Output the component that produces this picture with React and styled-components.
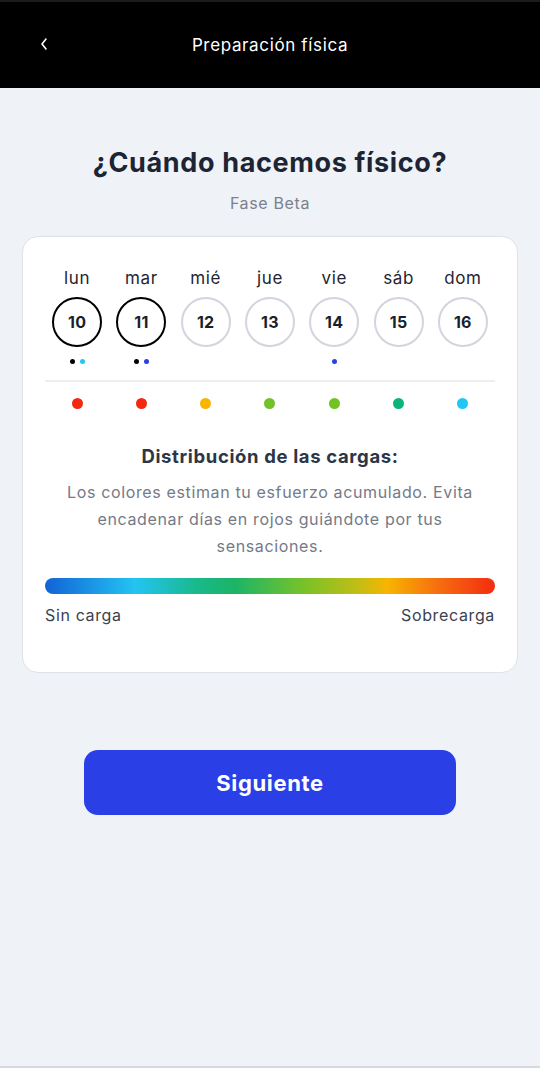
import React from 'react'
import styled, { createGlobalStyle } from 'styled-components'

const GlobalStyle = createGlobalStyle`
  html, body {
    margin: 0;
    padding: 0;
    background: #eff2f7;
  }
  body {
    font-family: Inter, 'Noto Sans', sans-serif;
  }
`

const Screen = styled.div`
  width: 540px;
  height: 1080px;
  display: flex;
  flex-direction: column;
  background: #eff2f7;
  letter-spacing: 0.04em;
`

const Header = styled.header`
  height: 86px;
  border-top: 2px solid #1c1c1c;
  background: #000;
  color: #fff;
  display: flex;
  align-items: center;
  justify-content: center;
  position: relative;
  font-size: 17px;
`

const Back = styled.button`
  position: absolute;
  left: 34px;
  top: 32px;
  width: 20px;
  height: 20px;
  padding: 0;
  border: none;
  background: none;
  display: flex;
  align-items: center;
  justify-content: center;
`

const Main = styled.main`
  flex: 1;
  display: flex;
  flex-direction: column;
  align-items: center;
  padding: 58px 22px 0;
`

const Title = styled.h1`
  margin: 0;
  font-size: 27px;
  font-weight: 700;
  color: #1d2433;
  line-height: 34px;
`

const Subtitle = styled.p`
  margin: 13px 0 0;
  font-size: 16px;
  color: #7b818d;
  line-height: 20px;
`

const Card = styled.section`
  margin-top: 23px;
  width: 100%;
  box-sizing: border-box;
  background: #fff;
  border: 1px solid #dde2ea;
  border-radius: 16px;
  padding: 30px 22px 46px;
`

const Week = styled.div`
  display: grid;
  grid-template-columns: repeat(7, 1fr);
`

const Day = styled.div`
  display: flex;
  flex-direction: column;
  align-items: center;
`

const DayName = styled.span`
  font-size: 17px;
  color: #1f2533;
  line-height: 22px;
`

const DayCircle = styled.div`
  margin-top: 8px;
  width: 46px;
  height: 46px;
  border-radius: 50%;
  border: 2px solid ${(p) => (p.$active ? '#000' : '#d1d5dc')};
  display: flex;
  align-items: center;
  justify-content: center;
  font-size: 16px;
  font-weight: 700;
  color: #1a1f2b;
  letter-spacing: 0.02em;
`

const Marks = styled.div`
  height: 5px;
  margin-top: 12px;
  display: flex;
  gap: 5px;
`

const Mark = styled.span`
  width: 5px;
  height: 5px;
  border-radius: 50%;
  background: ${(p) => p.$color};
`

const Divider = styled.hr`
  margin: 16px 0 0;
  border: none;
  border-top: 2px solid #eceef2;
`

const LoadRow = styled.div`
  display: grid;
  grid-template-columns: repeat(7, 1fr);
  justify-items: center;
  padding-top: 16px;
`

const LoadDot = styled.span`
  width: 11px;
  height: 11px;
  border-radius: 50%;
  background: ${(p) => p.$color};
`

const SectionTitle = styled.h2`
  margin: 35px 0 0;
  text-align: center;
  font-size: 18.5px;
  font-weight: 700;
  color: #2d3648;
  line-height: 24px;
`

const Text = styled.p`
  margin: 11px 0 0;
  text-align: center;
  font-size: 16px;
  line-height: 27px;
  color: #747a87;
`

const Scale = styled.div`
  margin-top: 18px;
  height: 16px;
  border-radius: 8px;
  background: linear-gradient(
    90deg,
    #1262d6 0%,
    #23c4f2 20%,
    #19b98a 34%,
    #1bb468 42%,
    #74c22a 57%,
    #c5bd14 70%,
    #f7b500 76%,
    #f66a10 88%,
    #f32c10 100%
  );
`

const ScaleLabels = styled.div`
  margin-top: 10px;
  display: flex;
  justify-content: space-between;
  font-size: 16px;
  line-height: 22px;
  color: #3a4150;
`

const NextButton = styled.button`
  margin-top: 77px;
  width: 372px;
  height: 65px;
  border: none;
  border-radius: 14px;
  background: #2a40e6;
  color: #fff;
  font-family: inherit;
  letter-spacing: inherit;
  font-size: 22px;
  font-weight: 700;
`

const Footer = styled.div`
  height: 12px;
  border-top: 2px solid #d5d9df;
  background: #fff;
`

const days = [
  { name: 'lun', num: 10, active: true, marks: ['#000', '#23c6f2'] },
  { name: 'mar', num: 11, active: true, marks: ['#000', '#2a40e6'] },
  { name: 'mié', num: 12, marks: [] },
  { name: 'jue', num: 13, marks: [] },
  { name: 'vie', num: 14, marks: ['#2a40e6'] },
  { name: 'sáb', num: 15, marks: [] },
  { name: 'dom', num: 16, marks: [] },
]

const loads = ['#f5290f', '#f5290f', '#f9b500', '#72c227', '#72c227', '#0db37a', '#23c6f2']

export default function App() {
  return (
    <Screen>
      <GlobalStyle />
      <Header>
        <Back aria-label="Volver">
          <svg width="10" height="16" viewBox="0 0 10 16" fill="none">
            <path d="M7 3 L3 8 L7 13" stroke="#fff" strokeWidth="1.6" strokeLinecap="round" strokeLinejoin="round" />
          </svg>
        </Back>
        Preparación física
      </Header>
      <Main>
        <Title>¿Cuándo hacemos físico?</Title>
        <Subtitle>Fase Beta</Subtitle>
        <Card>
          <Week>
            {days.map((d) => (
              <Day key={d.num}>
                <DayName>{d.name}</DayName>
                <DayCircle $active={d.active}>{d.num}</DayCircle>
                <Marks>
                  {d.marks.map((c, i) => (
                    <Mark key={i} $color={c} />
                  ))}
                </Marks>
              </Day>
            ))}
          </Week>
          <Divider />
          <LoadRow>
            {loads.map((c, i) => (
              <LoadDot key={i} $color={c} />
            ))}
          </LoadRow>
          <SectionTitle>Distribución de las cargas:</SectionTitle>
          <Text>
            Los colores estiman tu esfuerzo acumulado. Evita encadenar días en rojos guiándote por tus sensaciones.
          </Text>
          <Scale />
          <ScaleLabels>
            <span>Sin carga</span>
            <span>Sobrecarga</span>
          </ScaleLabels>
        </Card>
        <NextButton>Siguiente</NextButton>
      </Main>
      <Footer />
    </Screen>
  )
}
